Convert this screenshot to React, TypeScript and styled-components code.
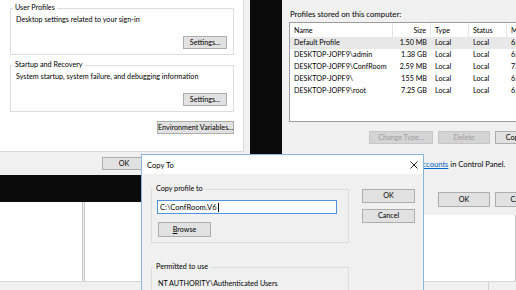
import React from "react";
import styled, { createGlobalStyle, css } from "styled-components";

const GlobalStyle = createGlobalStyle`
  html, body {
    margin: 0;
    padding: 0;
    background: #0b0b0b;
  }
`;

const uiFont = css`
  font-family: Lato, "Liberation Sans", Arial, sans-serif;
  font-size: 7.2px;
  line-height: 10px;
  color: #000;
`;

const Desktop = styled.div`
  position: relative;
  width: 516px;
  height: 290px;
  overflow: hidden;
  background: #0b0b0b;
  ${uiFont};
`;

/* ---------- shared controls ---------- */

const Button = styled.button<{ $w: number; $h?: number }>`
  ${uiFont};
  box-sizing: border-box;
  width: ${(p) => p.$w}px;
  height: ${(p) => p.$h ?? 13}px;
  flex: none;
  margin: 0;
  padding: 0;
  white-space: nowrap;
  background: #e1e1e1;
  border: 1px solid #adadad;
  border-radius: 0;
  text-align: center;

  &:disabled {
    background: #d4d4d4;
    border-color: #c6c6c6;
    color: #9d9d9d;
  }
`;

const GroupBox = styled.fieldset<{ $w: number; $pad?: string }>`
  box-sizing: border-box;
  width: ${(p) => p.$w}px;
  min-width: 0;
  margin: 0;
  padding: ${(p) => p.$pad ?? "2px 6px 5px 5px"};
  border: 1px solid #dcdcdc;
  display: flex;
  flex-direction: column;
`;

const GroupLabel = styled.legend`
  padding: 0 2px;
  margin-left: -3px;
  line-height: 10px;
`;

const Text = styled.div<{ $indent?: number; $size?: number }>`
  line-height: 10px;
  white-space: nowrap;
  padding-left: ${(p) => p.$indent ?? 0}px;
  ${(p) => p.$size && `font-size: ${p.$size}px;`}
`;

const ButtonRow = styled.div<{ $top?: number; $gap?: number; $right?: number }>`
  display: flex;
  justify-content: flex-end;
  gap: ${(p) => p.$gap ?? 5}px;
  margin-top: ${(p) => p.$top ?? 0}px;
  padding-right: ${(p) => p.$right ?? 0}px;
`;

/* ---------- window underneath (bottom) ---------- */

const BackWindow = styled.div`
  position: absolute;
  left: 0;
  top: 202px;
  width: 516px;
  height: 88px;
  background: #f0f0f0;
  display: flex;
  flex-direction: column;
`;

const PaneRow = styled.div`
  height: 79px;
  display: flex;
  gap: 1px;
`;

const Pane = styled.div<{ $w?: number }>`
  flex: ${(p) => (p.$w ? `0 0 ${p.$w}px` : "1")};
  box-sizing: border-box;
  background: #fff;
  border-right: 1px solid #c8c8c8;
  & + & {
    border-left: 1px solid #c8c8c8;
  }
`;

const StatusStrip = styled.div`
  flex: 1;
  display: flex;
  border-top: 1px solid #d8d8d8;
`;

const StatusCell = styled.div<{ $w?: number }>`
  flex: ${(p) => (p.$w ? `0 0 ${p.$w}px` : "1")};
  border-left: 1px solid #d0d0d0;
  &:first-child {
    border-left: none;
  }
`;

/* ---------- System Properties (left) ---------- */

const SystemWindow = styled.div`
  position: absolute;
  left: 0;
  top: 0;
  width: 250px;
  height: 175px;
  background: #f0f0f0;
  display: flex;
  flex-direction: column;
`;

const TabPage = styled.div`
  box-sizing: border-box;
  width: 244px;
  height: 152px;
  padding: 3px 0 0 10px;
  background: #fff;
  border-right: 1px solid #d9d9d9;
  border-bottom: 1px solid #d9d9d9;
  display: flex;
  flex-direction: column;
  gap: 5px;
`;

const EnvRow = styled(ButtonRow)`
  width: 224px;
  margin-top: 4px;
`;

const WindowFooter = styled.div<{ $left: number; $top: number }>`
  padding: ${(p) => p.$top}px 0 0 ${(p) => p.$left}px;
  display: flex;
`;

/* ---------- User Profiles (right) ---------- */

const ProfilesWindow = styled.div`
  position: absolute;
  left: 282px;
  top: 0;
  box-sizing: border-box;
  width: 272px;
  height: 215px;
  padding: 9px 7px 0;
  background: #f0f0f0;
  display: flex;
  flex-direction: column;
`;

const ListBox = styled.div`
  box-sizing: border-box;
  margin-top: 3px;
  height: 100px;
  background: #fff;
  border: 1px solid #9c9c9c;
  overflow: hidden;
`;

const columns = "103px 38px 38px 38px 80px";

const ListHeader = styled.div`
  display: grid;
  grid-template-columns: ${columns};
  height: 14px;
`;

const HeaderCell = styled.div<{ $right?: boolean }>`
  box-sizing: border-box;
  padding: 1px 4px 0;
  line-height: 14px;
  white-space: nowrap;
  overflow: hidden;
  text-align: ${(p) => (p.$right ? "right" : "left")};
  border-right: 1px solid #e5e5e5;
`;

const ListRow = styled.div<{ $selected?: boolean }>`
  display: grid;
  grid-template-columns: ${columns};
  height: 12px;
  background: ${(p) => (p.$selected ? "#e8e8e8" : "transparent")};
`;

const Cell = styled.div<{ $right?: boolean }>`
  padding: 0 4px;
  line-height: 12px;
  white-space: nowrap;
  overflow: hidden;
  text-align: ${(p) => (p.$right ? "right" : "left")};
`;

const Note = styled.div`
  margin: 15px 0 0 -5px;
  font-size: 7.6px;
  line-height: 10px;
  white-space: nowrap;
`;

const Link = styled.span`
  color: #0066cc;
  text-decoration: underline;
`;

/* ---------- Copy To dialog ---------- */

const CopyDialog = styled.div`
  position: absolute;
  left: 141px;
  top: 154px;
  box-sizing: border-box;
  width: 283px;
  height: 140px;
  background: #f0f0f0;
  border: 1px solid #8cb6e2;
  display: flex;
  flex-direction: column;
`;

const TitleBar = styled.div`
  height: 19px;
  flex: none;
  background: #fff;
  display: flex;
  align-items: center;
  justify-content: space-between;
  padding: 0 5px 0 5px;
  font-size: 7.6px;
`;

const DialogBody = styled.div`
  display: flex;
  align-items: flex-start;
  padding: 10px 0 0 9px;
`;

const DialogColumn = styled.div`
  display: flex;
  flex-direction: column;
  gap: 19px;
`;

const ButtonColumn = styled.div`
  display: flex;
  flex-direction: column;
  gap: 6px;
  margin: 5px 0 0 13px;
`;

const TextField = styled.div`
  box-sizing: border-box;
  width: 180px;
  height: 14px;
  padding: 0 2px;
  background: #fff;
  border: 1px solid #4d94dc;
  line-height: 12px;
  white-space: nowrap;
  font-size: 7.6px;
`;

const Caret = styled.span`
  display: inline-block;
  width: 1px;
  height: 9px;
  margin-left: 1px;
  vertical-align: -2px;
  background: #000;
`;

const BrowseButton = styled(Button)`
  margin: 8px 0 0 1px;
`;

const CloseGlyph = () => (
  <svg width="8" height="8" viewBox="0 0 8 8" aria-hidden>
    <path d="M0.5 0.5 L7.5 7.5 M7.5 0.5 L0.5 7.5" stroke="#111" strokeWidth="0.9" fill="none" />
  </svg>
);

const profiles = [
  { name: "Default Profile", size: "1.50 MB", modified: "6/19/2020" },
  { name: "DESKTOP-JOPF9\\admin", size: "1.38 GB", modified: "6/19/2020" },
  { name: "DESKTOP-JOPF9\\ConfRoom", size: "2.59 MB", modified: "7/14/2020" },
  { name: "DESKTOP-JOPF9\\", size: "155 MB", modified: "6/19/2020" },
  { name: "DESKTOP-JOPF9\\root", size: "7.25 GB", modified: "6/19/2020" },
];

export default function App() {
  return (
    <>
      <GlobalStyle />
      <Desktop>
        <BackWindow>
          <PaneRow>
            <Pane $w={83} />
            <Pane />
          </PaneRow>
          <StatusStrip>
            <StatusCell $w={488} />
            <StatusCell />
          </StatusStrip>
        </BackWindow>

        <SystemWindow>
          <TabPage>
            <GroupBox $w={224}>
              <GroupLabel>User Profiles</GroupLabel>
              <Text>Desktop settings related to your sign-in</Text>
              <ButtonRow $top={11}>
                <Button $w={44}>Settings...</Button>
              </ButtonRow>
            </GroupBox>
            <GroupBox $w={224}>
              <GroupLabel>Startup and Recovery</GroupLabel>
              <Text>System startup, system failure, and debugging information</Text>
              <ButtonRow $top={11}>
                <Button $w={44}>Settings...</Button>
              </ButtonRow>
            </GroupBox>
            <EnvRow $right={1}>
              <Button $w={77}>Environment Variables...</Button>
            </EnvRow>
          </TabPage>
          <WindowFooter $left={102} $top={5}>
            <Button $w={44}>OK</Button>
          </WindowFooter>
        </SystemWindow>

        <ProfilesWindow>
          <Text $indent={1} $size={7.8}>
            Profiles stored on this computer:
          </Text>
          <ListBox>
            <ListHeader>
              <HeaderCell>Name</HeaderCell>
              <HeaderCell $right>Size</HeaderCell>
              <HeaderCell>Type</HeaderCell>
              <HeaderCell>Status</HeaderCell>
              <HeaderCell>Modified</HeaderCell>
            </ListHeader>
            {profiles.map((p, i) => (
              <ListRow key={p.name} $selected={i === 0}>
                <Cell>{p.name}</Cell>
                <Cell $right>{p.size}</Cell>
                <Cell>Local</Cell>
                <Cell>Local</Cell>
                <Cell>{p.modified}</Cell>
              </ListRow>
            ))}
          </ListBox>
          <ButtonRow $top={9}>
            <Button $w={64} disabled>
              Change Type...
            </Button>
            <Button $w={52} disabled>
              Delete
            </Button>
            <Button $w={52}>Copy To...</Button>
          </ButtonRow>
          <Note>
            To create new user accounts, open <Link>User Accounts</Link> in Control Panel.
          </Note>
          <ButtonRow $top={23}>
            <Button $w={52} $h={15}>
              OK
            </Button>
            <Button $w={52} $h={15}>
              Cancel
            </Button>
          </ButtonRow>
        </ProfilesWindow>

        <CopyDialog>
          <TitleBar>
            <span>Copy To</span>
            <CloseGlyph />
          </TitleBar>
          <DialogBody>
            <DialogColumn>
              <GroupBox $w={198} $pad="6px 6px 5px 5px">
                <GroupLabel>Copy profile to</GroupLabel>
                <TextField>
                  C:\ConfRoom.V6
                  <Caret />
                </TextField>
                <BrowseButton $w={53} $h={15}>
                  <u>B</u>rowse
                </BrowseButton>
              </GroupBox>
              <GroupBox $w={198} $pad="7px 6px 10px 5px">
                <GroupLabel>Permitted to use</GroupLabel>
                <Text $indent={1}>NT AUTHORITY\Authenticated Users</Text>
              </GroupBox>
            </DialogColumn>
            <ButtonColumn>
              <Button $w={53} $h={14}>
                OK
              </Button>
              <Button $w={53} $h={14}>
                Cancel
              </Button>
            </ButtonColumn>
          </DialogBody>
        </CopyDialog>
      </Desktop>
    </>
  );
}
